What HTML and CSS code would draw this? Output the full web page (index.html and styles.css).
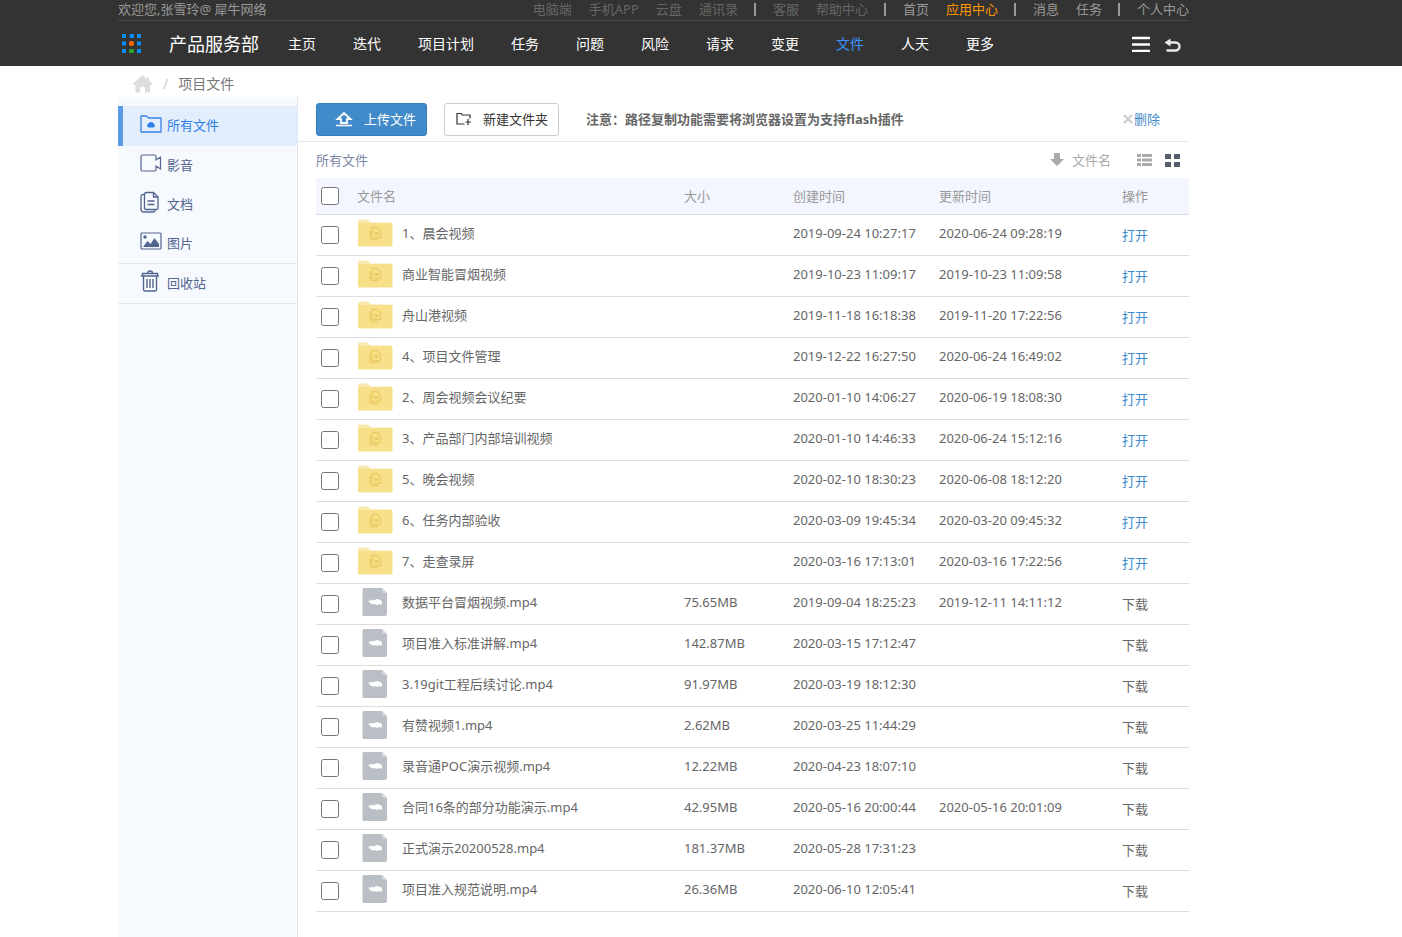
FILE: index.html
```
<!DOCTYPE html>
<html lang="zh-CN">
<head>
    <meta charset="UTF-8">
    <meta name="viewport" content="width=device-width, initial-scale=1.0">
    <title>项目文件</title>
    <link rel="stylesheet" href="styles.css">
</head>
<body>
    <svg class="sprite" aria-hidden="true">
        <symbol id="folder" viewBox="0 0 36 28">
            <path d="M1 2a1.500 1.500 0 0 1 1.500-1.500h8.500l3 3h19.500a1.500 1.500 0 0 1 1.500 1.500v4H1z" fill="#f9e8b0"/>
            <rect x="1" y="4" width="34.500" height="23.500" rx="1" fill="#f8e08a"/>
            <path d="M15 9.500a1 1 0 0 1 1-1h4l3.500 3.500v5.500a1 1 0 0 1-1 1H16a1 1 0 0 1-1-1z" fill="none" stroke="#ebcb63" stroke-width="1.400"/>
            <path d="M13 11v7.500a2 2 0 0 0 2 2h6" fill="none" stroke="#ebcb63" stroke-width="1.400"/>
            <rect x="17.500" y="13" width="4" height="3" fill="#ebcb63"/>
        </symbol>
        <symbol id="video" viewBox="0 0 26 28">
            <path d="M2 0h18l5 5v21a2 2 0 0 1-2 2H2a1.500 1.500 0 0 1-1.500-1.500v-25A1.500 1.500 0 0 1 2 0z" fill="#b9bfc5"/>
            <path d="M20 0v3.500L21.500 5H25z" fill="#d3d8dc"/>
            <path d="M6 12l2 1 1.500-1.500 1.500 1 4-1.500 3.500 1 1.500 1.500v3h-2l-.8-.8-1 1h-2.200l-1-.8-2 .5-1.500-.3-2-1.600z" fill="#fff"/>
        </symbol>
    </svg>

    <header class="header">
        <div class="wrap">
            <div class="topbar">
                <p>欢迎您,张雪玲@ 犀牛网络</p>
                <nav class="toplinks">
                    <a class="dim" href="#">电脑端</a>
                    <a class="dim" href="#">手机APP</a>
                    <a class="dim" href="#">云盘</a>
                    <a class="dim" href="#">通讯录</a>
                    <i class="sep"></i>
                    <a class="dim" href="#">客服</a>
                    <a class="dim" href="#">帮助中心</a>
                    <i class="sep"></i>
                    <a href="#">首页</a>
                    <a class="orange" href="#">应用中心</a>
                    <i class="sep"></i>
                    <a href="#">消息</a>
                    <a href="#">任务</a>
                    <i class="sep"></i>
                    <a href="#">个人中心</a>
                </nav>
            </div>
            <div class="mainbar">
                <svg class="apps" width="20" height="20" viewBox="0 0 20 20">
                    <g fill="#0a8cff">
                        <rect x="0" y="0" width="4" height="4"/><rect x="7.500" y="0" width="4.500" height="4" rx="1"/><rect x="15" y="0" width="4" height="4"/>
                        <rect x="0" y="7.500" width="4" height="4"/><rect x="15" y="7.500" width="4" height="4"/>
                        <rect x="0" y="15" width="4" height="4"/><rect x="15" y="15" width="4" height="4"/>
                    </g>
                    <rect x="7" y="7" width="5" height="5" rx="2" fill="#ff6a00"/>
                    <rect x="7" y="15" width="5" height="4" rx="1" fill="#2fa52f"/>
                </svg>
                <h1>产品服务部</h1>
                <nav class="mainnav">
                    <a href="#">主页</a>
                    <a href="#">迭代</a>
                    <a href="#">项目计划</a>
                    <a href="#">任务</a>
                    <a href="#">问题</a>
                    <a href="#">风险</a>
                    <a href="#">请求</a>
                    <a href="#">变更</a>
                    <a class="current" href="#">文件</a>
                    <a href="#">人天</a>
                    <a href="#">更多</a>
                </nav>
                <div class="tools">
                    <button aria-label="菜单"><svg width="18" height="16" viewBox="0 0 18 16"><path d="M1 2h16M1 8.500h16M1 15h16" stroke="#fff" stroke-width="2.600" stroke-linecap="round"/></svg></button>
                    <button aria-label="返回"><svg width="17" height="16" viewBox="0 0 17 16"><path d="M5 6.500h6.500a3.800 3.800 0 0 1 0 8H2.500" fill="none" stroke="#e8e8e8" stroke-width="2.400"/><path d="M0.500 6.500L6.500 2.500v8z" fill="#e8e8e8"/></svg></button>
                </div>
            </div>
        </div>
    </header>

    <div class="wrap">
        <div class="crumbs">
            <a href="#" aria-label="首页"><svg width="20" height="18" viewBox="0 0 20 18"><path d="M9.500 0L0 8.500V10h2.500v6.500a1 1 0 0 0 1 1H7v-3.500a2 2 0 0 1 5 0v3.500h4a1 1 0 0 0 1-1V10h2V8.500L16 5.500V2.500h-2v1.500z" fill="#ddd"/></svg></a>
            <span class="slash">/</span>
            <span>项目文件</span>
        </div>
        <div class="layout">
            <aside class="sidebar">
                <a class="active" href="#">
                    <svg width="22" height="20" viewBox="0 0 22 20"><path d="M1 18V2h5.500l2 2H21v14z" fill="none" stroke="#3b82e6" stroke-width="1.300" stroke-linejoin="round"/><path d="M8.500 13.500a2 2 0 0 1-.5-3.500 3.200 3.200 0 0 1 6 0 2 2 0 0 1-.5 3.500z" fill="#2f7de8"/></svg>
                    <span>所有文件</span>
                </a>
                <a href="#">
                    <svg width="22" height="20" viewBox="0 0 22 20"><g fill="none" stroke="#53648e" stroke-width="1.200"><path d="M16 7V3.500A1.500 1.500 0 0 0 14.500 2h-12A1.500 1.500 0 0 0 1 3.500v13A1.500 1.500 0 0 0 2.500 18h12a1.500 1.500 0 0 0 1.500-1.500V13l4.500 3V4z"/></g></svg>
                    <span>影音</span>
                </a>
                <a href="#">
                    <svg width="22" height="22" viewBox="0 0 22 22"><g fill="none" stroke="#53648e" stroke-width="1.300"><path d="M4.500 3A1.500 1.500 0 0 1 6 1.500h7.500l4.500 4.500v11a1.500 1.500 0 0 1-1.500 1.500H6A1.500 1.500 0 0 1 4.500 17z"/><path d="M13.500 1.500V6H18M4.500 3.500H3A2 2 0 0 0 1 5.500v13a2.500 2.500 0 0 0 2.500 2.500H13a2 2 0 0 0 2-2M7.500 10h7M7.500 13.500h7"/></g></svg>
                    <span>文档</span>
                </a>
                <a href="#">
                    <svg width="22" height="20" viewBox="0 0 22 20"><rect x="1" y="2" width="20" height="16" rx="1" fill="none" stroke="#53648e" stroke-width="1.200"/><path d="M3 16l4.500-6 3 3L14.500 7 19 13v3z" fill="#53648e"/><circle cx="5" cy="6" r="1.700" fill="#53648e"/></svg>
                    <span>图片</span>
                </a>
                <a class="trash" href="#">
                    <svg width="22" height="22" viewBox="0 0 22 22"><g fill="none" stroke="#53648e" stroke-width="1.400"><path d="M1 6h18M2.500 6V3.500h15V6M7.500 3.500a2.500 2.500 0 0 1 5 0M3.500 6v13.500A1.500 1.500 0 0 0 5 21h10a1.500 1.500 0 0 0 1.500-1.500V6M7 9v9M10 9v9M13 9v9"/></g></svg>
                    <span>回收站</span>
                </a>
            </aside>

            <main class="content">
                <div class="toolbar">
                    <button class="btn primary"><svg width="18" height="16" viewBox="0 0 18 16"><path d="M9 2L2.500 8H6v4h6V8h3.500z" fill="none" stroke="#fff" stroke-width="1.800"/><path d="M1 14.500h16" stroke="#fff" stroke-width="1.500"/></svg>上传文件</button>
                    <button class="btn plain"><svg width="16" height="14" viewBox="0 0 16 14"><path d="M8.500 12H1V1.500h4l1.500 1.500H14v3.500M12 7v6M9.500 10h5.500" fill="none" stroke="#333" stroke-width="1.200"/></svg>新建文件夹</button>
                    <strong>注意：路径复制功能需要将浏览器设置为支持flash插件</strong>
                    <a class="remove" href="#"><svg width="10" height="10" viewBox="0 0 10 10"><path d="M1 1l8 8M9 1l-8 8" stroke="#ccc" stroke-width="2.200"/></svg>删除</a>
                </div>
                <div class="subbar">
                    <span class="path">所有文件</span>
                    <button class="sort"><svg width="14" height="14" viewBox="0 0 14 14"><path d="M4 0h6v6h4l-7 7-7-7h4z" fill="#aaa"/></svg>文件名</button>
                    <button aria-label="列表"><svg width="15" height="12" viewBox="0 0 15 12"><path d="M0 0h4v3H0zM5 0h10v3H5zM0 4.500h4v3H0zM5 4.500h10v3H5zM0 9h4v3H0zM5 9h10v3H5z" fill="#aaa"/></svg></button>
                    <button aria-label="缩略图"><svg width="15" height="13" viewBox="0 0 15 13"><path d="M0 0h6v5H0zM9 0h6v5H9zM0 8h6v5H0zM9 8h6v5H9z" fill="#555c6b"/></svg></button>
                </div>
                <table class="files">
                    <thead>
                        <tr><th class="check"><input type="checkbox" aria-label="全选"></th><th>文件名</th><th class="size">大小</th><th class="created">创建时间</th><th class="updated">更新时间</th><th class="action">操作</th></tr>
                    </thead>
                    <tbody>
                        <tr><td><input type="checkbox" aria-label="1、晨会视频"></td><td><div class="name"><svg><use href="#folder"/></svg>1、晨会视频</div></td><td></td><td>2019-09-24 10:27:17</td><td>2020-06-24 09:28:19</td><td><a class="open" href="#">打开</a></td></tr>
                        <tr><td><input type="checkbox" aria-label="商业智能冒烟视频"></td><td><div class="name"><svg><use href="#folder"/></svg>商业智能冒烟视频</div></td><td></td><td>2019-10-23 11:09:17</td><td>2019-10-23 11:09:58</td><td><a class="open" href="#">打开</a></td></tr>
                        <tr><td><input type="checkbox" aria-label="舟山港视频"></td><td><div class="name"><svg><use href="#folder"/></svg>舟山港视频</div></td><td></td><td>2019-11-18 16:18:38</td><td>2019-11-20 17:22:56</td><td><a class="open" href="#">打开</a></td></tr>
                        <tr><td><input type="checkbox" aria-label="4、项目文件管理"></td><td><div class="name"><svg><use href="#folder"/></svg>4、项目文件管理</div></td><td></td><td>2019-12-22 16:27:50</td><td>2020-06-24 16:49:02</td><td><a class="open" href="#">打开</a></td></tr>
                        <tr><td><input type="checkbox" aria-label="2、周会视频会议纪要"></td><td><div class="name"><svg><use href="#folder"/></svg>2、周会视频会议纪要</div></td><td></td><td>2020-01-10 14:06:27</td><td>2020-06-19 18:08:30</td><td><a class="open" href="#">打开</a></td></tr>
                        <tr><td><input type="checkbox" aria-label="3、产品部门内部培训视频"></td><td><div class="name"><svg><use href="#folder"/></svg>3、产品部门内部培训视频</div></td><td></td><td>2020-01-10 14:46:33</td><td>2020-06-24 15:12:16</td><td><a class="open" href="#">打开</a></td></tr>
                        <tr><td><input type="checkbox" aria-label="5、晚会视频"></td><td><div class="name"><svg><use href="#folder"/></svg>5、晚会视频</div></td><td></td><td>2020-02-10 18:30:23</td><td>2020-06-08 18:12:20</td><td><a class="open" href="#">打开</a></td></tr>
                        <tr><td><input type="checkbox" aria-label="6、任务内部验收"></td><td><div class="name"><svg><use href="#folder"/></svg>6、任务内部验收</div></td><td></td><td>2020-03-09 19:45:34</td><td>2020-03-20 09:45:32</td><td><a class="open" href="#">打开</a></td></tr>
                        <tr><td><input type="checkbox" aria-label="7、走查录屏"></td><td><div class="name"><svg><use href="#folder"/></svg>7、走查录屏</div></td><td></td><td>2020-03-16 17:13:01</td><td>2020-03-16 17:22:56</td><td><a class="open" href="#">打开</a></td></tr>
                        <tr><td><input type="checkbox" aria-label="数据平台冒烟视频.mp4"></td><td><div class="name"><svg><use href="#video"/></svg>数据平台冒烟视频.mp4</div></td><td>75.65MB</td><td>2019-09-04 18:25:23</td><td>2019-12-11 14:11:12</td><td><a href="#">下载</a></td></tr>
                        <tr><td><input type="checkbox" aria-label="项目准入标准讲解.mp4"></td><td><div class="name"><svg><use href="#video"/></svg>项目准入标准讲解.mp4</div></td><td>142.87MB</td><td>2020-03-15 17:12:47</td><td></td><td><a href="#">下载</a></td></tr>
                        <tr><td><input type="checkbox" aria-label="3.19git工程后续讨论.mp4"></td><td><div class="name"><svg><use href="#video"/></svg>3.19git工程后续讨论.mp4</div></td><td>91.97MB</td><td>2020-03-19 18:12:30</td><td></td><td><a href="#">下载</a></td></tr>
                        <tr><td><input type="checkbox" aria-label="有赞视频1.mp4"></td><td><div class="name"><svg><use href="#video"/></svg>有赞视频1.mp4</div></td><td>2.62MB</td><td>2020-03-25 11:44:29</td><td></td><td><a href="#">下载</a></td></tr>
                        <tr><td><input type="checkbox" aria-label="录音通POC演示视频.mp4"></td><td><div class="name"><svg><use href="#video"/></svg>录音通POC演示视频.mp4</div></td><td>12.22MB</td><td>2020-04-23 18:07:10</td><td></td><td><a href="#">下载</a></td></tr>
                        <tr><td><input type="checkbox" aria-label="合同16条的部分功能演示.mp4"></td><td><div class="name"><svg><use href="#video"/></svg>合同16条的部分功能演示.mp4</div></td><td>42.95MB</td><td>2020-05-16 20:00:44</td><td>2020-05-16 20:01:09</td><td><a href="#">下载</a></td></tr>
                        <tr><td><input type="checkbox" aria-label="正式演示20200528.mp4"></td><td><div class="name"><svg><use href="#video"/></svg>正式演示20200528.mp4</div></td><td>181.37MB</td><td>2020-05-28 17:31:23</td><td></td><td><a href="#">下载</a></td></tr>
                        <tr><td><input type="checkbox" aria-label="项目准入规范说明.mp4"></td><td><div class="name"><svg><use href="#video"/></svg>项目准入规范说明.mp4</div></td><td>26.36MB</td><td>2020-06-10 12:05:41</td><td></td><td><a href="#">下载</a></td></tr>
                    </tbody>
                </table>
            </main>
        </div>
    </div>
</body>
</html>
```
FILE: styles.css
```
* {
    margin: 0;
    padding: 0;
    box-sizing: border-box;
}

body {
    font-family: "Noto Sans", "Noto Sans CJK SC", sans-serif;
    font-size: 13px;
    line-height: 20px;
    color: #666;
    background: #fff;
    min-height: 100vh;
    display: flex;
    flex-direction: column;
}

a {
    color: inherit;
    text-decoration: none;
}

button {
    font: inherit;
    color: inherit;
    background: none;
    border: none;
    cursor: pointer;
}

svg {
    display: block;
    flex-shrink: 0;
}

.sprite {
    display: none;
}

.wrap {
    width: 100%;
    max-width: 1166px;
    margin: 0 auto;
    padding-right: 95px;
}

.header {
    background: #333;
}

.header + .wrap {
    flex: 1;
    display: flex;
    flex-direction: column;
}

.topbar {
    display: flex;
    justify-content: space-between;
    height: 21px;
    line-height: 18px;
    color: #999;
    border-bottom: 1px solid #484848;
}

.toplinks {
    display: flex;
    gap: 17px;
}

.dim {
    color: #666;
}

.orange {
    color: #ff9600;
}

.sep {
    width: 2px;
    height: 13px;
    margin: 3px 0 0 -1px;
    background: #999;
}

.mainbar {
    display: flex;
    align-items: center;
    height: 45px;
    padding: 0 8px 0 4px;
    color: #fff;
}

.mainbar h1 {
    margin: 0 29px 0 27px;
    font-size: 18px;
    font-weight: 400;
}

.mainnav {
    display: flex;
    gap: 37px;
    font-size: 14px;
}

.mainnav .current {
    color: #3b94ff;
}

.tools {
    display: flex;
    gap: 14px;
    margin-left: auto;
}

.crumbs {
    display: flex;
    align-items: center;
    gap: 10px;
    height: 31px;
    padding: 5px 0 0 15px;
    font-size: 14px;
    color: #777;
}

.slash {
    color: #ccc;
}

.layout {
    flex: 1;
    display: flex;
}

.sidebar {
    width: 180px;
    flex-shrink: 0;
    padding-top: 9px;
    background: #f6fafe;
    border-right: 1px solid #e1e6ed;
    color: #53648e;
}

.sidebar a {
    display: flex;
    align-items: center;
    gap: 5px;
    height: 39px;
    padding: 0 0 2px 22px;
}

.sidebar svg {
    margin-bottom: 3px;
}

.sidebar .active {
    height: 40px;
    padding-left: 17px;
    border-left: 5px solid #5b9be3;
    background: #e2eefb;
    color: #2f7de8;
}

.sidebar .trash {
    height: 41px;
    border-top: 1px solid #e1e6ed;
    border-bottom: 1px solid #e1e6ed;
}

.content {
    flex: 1;
    padding-bottom: 25px;
}

.toolbar {
    display: flex;
    align-items: center;
    height: 45px;
    padding: 0 29px 0 18px;
    border-bottom: 1px solid #e6e6e6;
}

.btn {
    display: flex;
    align-items: center;
    gap: 11px;
    height: 33px;
    border-radius: 3px;
}

.primary {
    padding: 0 10px 0 18px;
    margin-right: 17px;
    border: 1px solid #357ebd;
    background: #428bca;
    color: #fff;
}

.plain {
    padding: 0 10px 0 11px;
    margin-right: 27px;
    border: 1px solid #ccc;
    background: #fff;
    color: #333;
}

.remove {
    display: flex;
    align-items: center;
    gap: 1px;
    margin-left: auto;
    color: #428bca;
}

.subbar {
    display: flex;
    align-items: center;
    gap: 13px;
    height: 36px;
    padding: 0 9px 0 18px;
}

.path {
    margin-right: auto;
    color: #7a86a8;
}

.sort {
    display: flex;
    align-items: center;
    gap: 8px;
    margin-right: 13px;
    color: #aaa;
}

.files {
    width: calc(100% - 18px);
    margin-left: 18px;
    border-collapse: collapse;
    table-layout: fixed;
}

.files th,
.files td {
    height: 41px;
    border-bottom: 1px solid #ddd;
    text-align: left;
}

.files td {
    padding-bottom: 3px;
}

.files td:first-child,
.files td:last-child {
    padding-bottom: 0;
}

.files th {
    height: 36px;
    background: #f3f6fe;
    color: #999;
    font-weight: 400;
}

.check {
    width: 41px;
}

.size {
    width: 109px;
}

.created {
    width: 146px;
}

.updated {
    width: 183px;
}

.action {
    width: 67px;
}

.files input {
    display: block;
    width: 18px;
    height: 18px;
    margin-left: 5px;
}

.name {
    display: flex;
    align-items: center;
    gap: 9px;
}

.name svg {
    width: 36px;
    height: 28px;
}

.open {
    color: #428bca;
}
```
